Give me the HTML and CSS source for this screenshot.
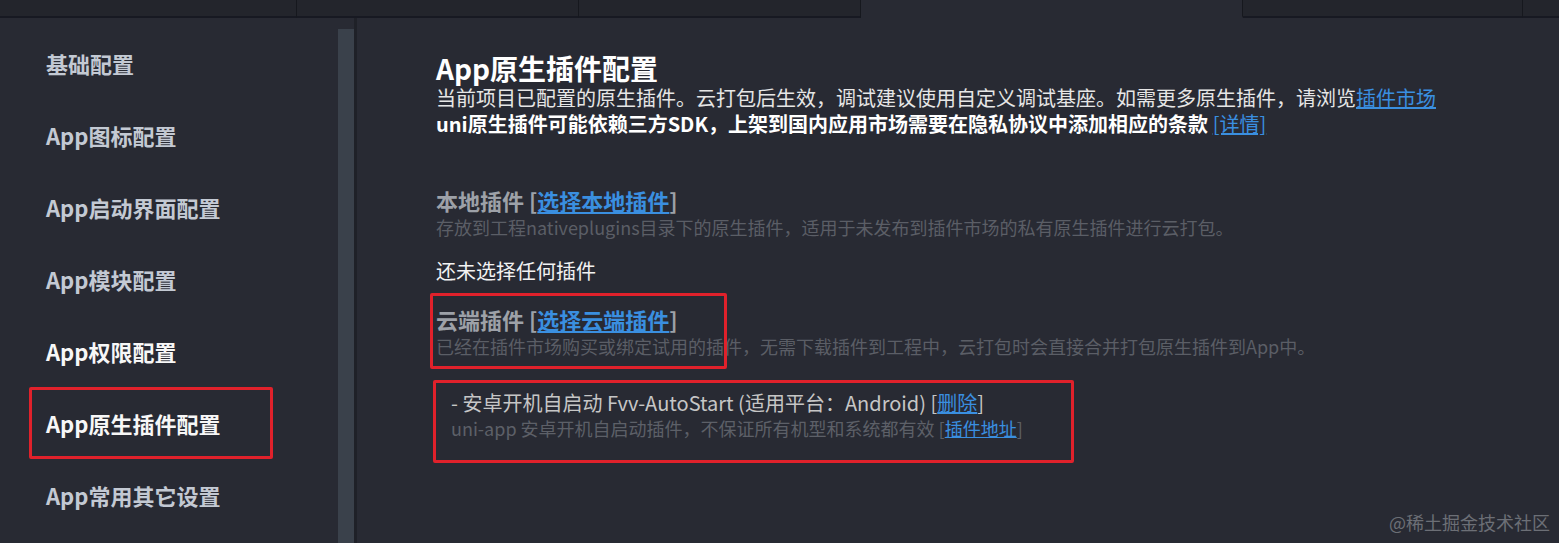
FILE: index.html
```html
<!DOCTYPE html>
<html lang="zh-CN">
<head>
    <meta charset="UTF-8">
    <meta name="viewport" content="width=device-width, initial-scale=1.0">
    <title>manifest.json - App原生插件配置</title>
    <link rel="stylesheet" href="styles.css">
</head>
<body>
<div class="tabs">
    <div class="tab tab-1"></div>
    <div class="tab tab-2"></div>
    <div class="tab tab-3"></div>
    <div class="tab tab-active"></div>
    <div class="tab tab-5"></div>
    <div class="tab tab-6"></div>
</div>

<div class="page">
    <!-- Left menu -->
    <nav class="sidebar">
        <ul class="menu">
            <li>基础配置</li>
            <li>App图标配置</li>
            <li>App启动界面配置</li>
            <li>App模块配置</li>
            <li class="bright">App权限配置</li>
            <li class="bright marked">App原生插件配置</li>
            <li>App常用其它设置</li>
        </ul>
        <div class="scrollbar"><div class="thumb"></div></div>
    </nav>

    <!-- Native plugin settings -->
    <main class="content">
        <h1>App原生插件配置</h1>
        <p class="intro">当前项目已配置的原生插件。云打包后生效，调试建议使用自定义调试基座。如需更多原生插件，请浏览<a href="#">插件市场</a></p>
        <p class="intro strong">uni原生插件可能依赖三方SDK，上架到国内应用市场需要在隐私协议中添加相应的条款 <a href="#">[详情]</a></p>

        <section class="local">
            <h2>本地插件 [<a href="#">选择本地插件</a>]</h2>
            <p class="desc">存放到工程nativeplugins目录下的原生插件，适用于未发布到插件市场的私有原生插件进行云打包。</p>
            <p class="empty">还未选择任何插件</p>
        </section>

        <section class="cloud">
            <span class="mark-box"></span>
            <h2>云端插件 [<a href="#">选择云端插件</a>]</h2>
            <p class="desc">已经在插件市场购买或绑定试用的插件，无需下载插件到工程中，云打包时会直接合并打包原生插件到App中。</p>
        </section>

        <div class="plugin">
            <p class="plugin-name">- 安卓开机自启动 Fvv-AutoStart (适用平台：Android) [<a href="#">删除</a>]</p>
            <p class="plugin-desc">uni-app 安卓开机自启动插件，不保证所有机型和系统都有效 [<a href="#">插件地址</a>]</p>
        </div>
    </main>
</div>

<div class="watermark">@稀土掘金技术社区</div>
</body>
</html>
```

FILE: styles.css
```css
* {
    box-sizing: border-box;
}

html, body {
    height: 100%;
}

body {
    margin: 0;
    background-color: #282a33;
    color: #e6e6e6;
    font-family: "Noto Sans CJK SC", "Noto Sans", sans-serif;
    overflow: hidden;
    position: relative;
}

p, h1, h2, ul {
    margin: 0;
    padding: 0;
}

a {
    color: #3a8fe0;
}

/* tabs */
.tabs {
    display: flex;
    height: 18px;
}

.tab {
    background-color: #23252c;
    border-right: 1px solid #16181e;
    border-bottom: 2px solid #171922;
}

.tab-1 { width: 297px; }
.tab-2 { width: 282px; }
.tab-3 { width: 282px; }
.tab-5 { width: 280px; }
.tab-6 { flex: 1; border-right: none; }

.tab-active {
    width: 382px;
    background-color: #282a33;
    border-bottom-color: #282a33;
}

/* layout */
.page {
    display: flex;
    height: calc(100% - 18px);
}

.sidebar {
    width: 357px;
    display: flex;
    flex-shrink: 0;
}

.menu {
    list-style: none;
    flex: 1;
    padding-top: 9px;
}

.menu li {
    width: 244px;
    height: 72px;
    margin-left: 29px;
    padding-left: 14px;
    border: 3px solid transparent;
    display: flex;
    align-items: center;
    font-size: 22px;
    font-weight: bold;
    color: #c3c9d3;
}

.menu li.bright {
    color: #f7f7f7;
}

.menu li.marked {
    border-color: #e0212b;
    border-radius: 2px;
}

.scrollbar {
    width: 19px;
    padding-top: 11px;
    border-right: 3px solid #1f2128;
}

.thumb {
    height: 100%;
    background-color: #3a414b;
}

/* content */
.content {
    flex: 1;
    padding: 34px 0 0 79px;
}

h1 {
    font-size: 28px;
    line-height: 32px;
    margin-bottom: 1px;
    color: #ffffff;
    font-weight: bold;
}

.intro {
    font-size: 20px;
    line-height: 26px;
    color: #e6e6e6;
}

.intro.strong {
    font-weight: bold;
    color: #ffffff;
}

.intro.strong a {
    font-weight: normal;
}

section {
    position: relative;
}

h2 {
    font-size: 22px;
    line-height: 28px;
    font-weight: bold;
    color: #9da1a8;
}

.local {
    margin-top: 49px;
}

.cloud {
    margin-top: 21px;
}

.desc {
    font-size: 18px;
    line-height: 26px;
    color: #5b5e66;
}

.empty {
    margin-top: 18px;
    font-size: 20px;
    line-height: 26px;
    color: #f2f2f2;
}

/* annotation box drawn over the cloud plugin heading */
.mark-box {
    position: absolute;
    top: -12px;
    left: -6px;
    width: 297px;
    height: 76px;
    border: 3px solid #e0212b;
    border-radius: 2px;
}

.plugin {
    width: 641px;
    margin: 21px 0 0 -3px;
    padding: 7px 0 20px 15px;
    border: 3px solid #e0212b;
    border-radius: 2px;
}

.plugin-name {
    font-size: 20px;
    line-height: 26px;
    color: #c6c6c6;
}

.plugin-desc {
    font-size: 18px;
    line-height: 24px;
    color: #5d6068;
}

.watermark {
    position: absolute;
    right: 9px;
    bottom: 8px;
    font-size: 18px;
    color: #6c6f76;
}
```
